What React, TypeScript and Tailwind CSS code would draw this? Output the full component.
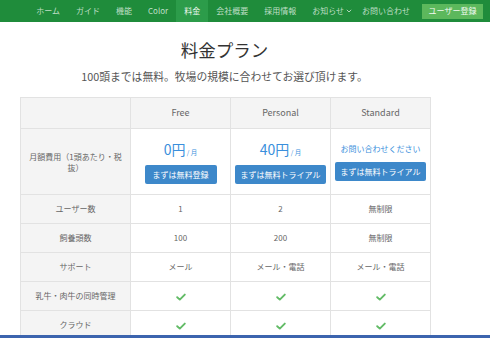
import React from "react";

const FONT = { fontFamily: '"Noto Sans CJK JP", "Liberation Sans", sans-serif' };

function Check() {
  return (
    <svg width="10" height="8" viewBox="0 0 10 8" className="inline-block">
      <path d="M1.2 4.2 L3.8 6.6 L8.8 1.6" fill="none" stroke="#62bb66" strokeWidth="1.9" strokeLinecap="round" strokeLinejoin="round" />
    </svg>
  );
}

const navItems = ["ホーム", "ガイド", "機能", "Color", "料金", "会社概要", "採用情報"];

export default function App() {
  const rows: { label: string; vals: React.ReactNode[] }[] = [
    { label: "ユーザー数", vals: ["1", "2", "無制限"] },
    { label: "飼養頭数", vals: ["100", "200", "無制限"] },
    { label: "サポート", vals: ["メール", "メール・電話", "メール・電話"] },
    { label: "乳牛・肉牛の同時管理", vals: [<Check />, <Check />, <Check />] },
    { label: "クラウド", vals: [<Check />, <Check />, <Check />] },
  ];
  return (
    <div className="w-[490px] h-[338px] overflow-hidden bg-white flex flex-col" style={FONT}>
      <nav className="h-[22px] shrink-0 bg-[#1f8c3b] flex items-stretch justify-end pr-[7px] text-[8px] text-[#bfdfc6]">
        {navItems.map((n) => (
          <div
            key={n}
            className={`px-2 flex items-center ${n === "料金" ? "bg-[#2c9c4a] text-[#eef8f0]" : ""}`}
          >
            {n}
          </div>
        ))}
        <div className="pl-2 pr-[2px] flex items-center gap-[2px]">
          お知らせ
          <svg width="6" height="4" viewBox="0 0 6 4">
            <path d="M0.8 0.8 L3 3 L5.2 0.8" fill="none" stroke="#bfdfc6" strokeWidth="0.9" />
          </svg>
        </div>
        <div className="px-2 flex items-center">お問い合わせ</div>
        <div className="flex items-center ml-[4px]">
          <div className="w-[61px] h-[15px] bg-[#5cb85c] text-[#f2faf2] flex items-center justify-center">
            ユーザー登録
          </div>
        </div>
      </nav>
      <main className="flex-1 overflow-hidden w-[449px] flex flex-col items-center">
        <h1 className="mt-[17px] text-[17.5px] leading-[22px] text-[#333]">料金プラン</h1>
        <p className="mt-[8px] text-[10.8px] leading-[14px] text-[#555]">
          100頭までは無料。牧場の規模に合わせてお選び頂けます。
        </p>
        <div className="self-start ml-[20px] mt-[14px]">
          <table className="border-collapse text-[8px] text-[#666] table-fixed w-[410px]">
            <colgroup>
              <col className="w-[110px]" />
              <col className="w-[100px]" />
              <col className="w-[100px]" />
              <col className="w-[100px]" />
            </colgroup>
            <thead>
              <tr className="h-[31px] bg-[#f4f4f4]">
                <th className="border border-[#e2e2e2] font-normal"></th>
                <th className="border border-[#e2e2e2] font-normal text-[9px]">Free</th>
                <th className="border border-[#e2e2e2] font-normal text-[9px]">Personal</th>
                <th className="border border-[#e2e2e2] font-normal text-[9px]">Standard</th>
              </tr>
            </thead>
            <tbody>
              <tr className="h-[66px]">
                <td className="border border-[#e2e2e2] bg-[#f4f4f4] px-[8px] text-center leading-[11px]">
                  月額費用（1頭あたり・税抜）
                </td>
                <td className="border border-[#e2e2e2] text-center align-top pt-[11px]">
                  <div className="text-[#3a8fdc] leading-[18px]">
                    <span className="text-[14px]">0円</span>
                    <span className="text-[6.5px]"> / 月</span>
                  </div>
                  <div className="mt-[4px] inline-flex h-[19px] px-[8px] items-center rounded-[2px] bg-[#3d88ca] text-white">
                    まずは無料登録
                  </div>
                </td>
                <td className="border border-[#e2e2e2] text-center align-top pt-[11px]">
                  <div className="text-[#3a8fdc] leading-[18px]">
                    <span className="text-[14px]">40円</span>
                    <span className="text-[6.5px]"> / 月</span>
                  </div>
                  <div className="mt-[4px] inline-flex h-[19px] px-[6px] items-center rounded-[2px] bg-[#3d88ca] text-white">
                    まずは無料トライアル
                  </div>
                </td>
                <td className="border border-[#e2e2e2] text-center align-top pt-[11px]">
                  <div className="text-[#3a8fdc] leading-[18px] text-[8px]">お問い合わせください</div>
                  <div className="mt-[4px] inline-flex h-[19px] px-[6px] items-center rounded-[2px] bg-[#3d88ca] text-white">
                    まずは無料トライアル
                  </div>
                </td>
              </tr>
              {rows.map((r) => (
                <tr key={r.label} className="h-[29px]">
                  <td className="border border-[#e2e2e2] bg-[#f4f4f4] text-center">{r.label}</td>
                  {r.vals.map((v, i) => (
                    <td key={i} className="border border-[#e2e2e2] text-center">
                      {v}
                    </td>
                  ))}
                </tr>
              ))}
            </tbody>
          </table>
        </div>
      </main>
      <div className="h-[3px] shrink-0 bg-[#3c64ae]" />
    </div>
  );
}
